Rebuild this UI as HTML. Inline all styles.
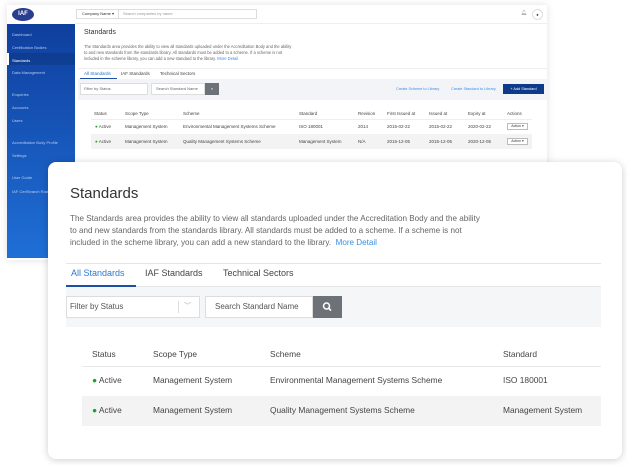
<!DOCTYPE html>
<html><head><style>
*{margin:0;padding:0;box-sizing:border-box}
body{width:627px;height:465px;background:#fff;position:relative;overflow:hidden;font-family:"Liberation Sans",sans-serif;color:#333}
.a{position:absolute;white-space:nowrap}
#back{position:absolute;left:7px;top:5px;width:540px;height:255px;background:#fff;box-shadow:0 0 8px rgba(0,0,0,.12)}
#side{position:absolute;left:7px;top:24px;width:68px;height:234px;background:linear-gradient(#0f3f9e,#1f6fd6)}
.s{position:absolute;left:5px;font-size:4px;color:#b9cbee}
#card{position:absolute;left:48px;top:162px;width:574px;height:297px;background:#fff;border-radius:8px;box-shadow:0 1px 8px rgba(0,0,0,.2)}
.f{font-size:4.5px;color:#444}
.F{font-size:8.4px;color:#444}
</style></head><body>
<div id="back"></div>
<!-- logo -->
<div class="a" style="left:12px;top:8px;width:22px;height:13px;border-radius:50%;background:#2a3d8f;color:#fff;font-size:6px;font-weight:bold;text-align:center;line-height:13px">IAF</div>
<div class="a" style="left:75px;top:5px;width:472px;height:19px;border-bottom:1px solid #eee"></div>
<div class="a" style="left:76px;top:9px;width:43px;height:10px;border:1px solid #ddd;font-size:4px;line-height:8px;padding-left:5px;color:#333">Company Name ▾</div>
<div class="a" style="left:119px;top:9px;width:138px;height:10px;border:1px solid #ddd;border-left:none;font-size:4px;line-height:8px;padding-left:4px;color:#999">Search companies by name</div>
<div class="a" style="left:521px;top:10px;font-size:5px;color:#888">🔔︎</div>
<div class="a" style="left:532px;top:9px;width:11px;height:11px;border:1px solid #ddd;border-radius:50%;font-size:4px;text-align:center;line-height:9px">●</div>
<div id="side">
<div class="s" style="top:8px">Dashboard</div>
<div class="s" style="top:21px">Certification Bodies</div>
<div style="position:absolute;left:0;top:29px;width:68px;height:12px;background:rgba(0,0,0,.12);border-left:2px solid #fff"></div>
<div class="s" style="top:34px;color:#fff">Standards</div>
<div class="s" style="top:46px">Data Management</div>
<div class="s" style="top:68px">Enquiries</div>
<div class="s" style="top:81px">Accounts</div>
<div class="s" style="top:94px">Users</div>
<div class="s" style="top:116px">Accreditation Body Profile</div>
<div class="s" style="top:129px">Settings</div>
<div class="s" style="top:151px">User Guide</div>
<div class="s" style="top:165px">IAF CertSearch Rad</div>
</div>
<div class="a" style="left:84px;top:29px;font-size:7px;color:#333">Standards</div>
<div class="a" style="left:84px;top:44px;font-size:4.1px;line-height:6px;color:#666">The Standards area provides the ability to view all standards uploaded under the Accreditation Body and the ability<br>to and new standards from the standards library. All standards must be added to a scheme. If a scheme is not<br>included in the scheme library, you can add a new standard to the library. <span style="color:#3a8ee6">More Detail</span></div>
<div class="a" style="left:78px;top:68px;width:469px;border-top:1px solid #eee"></div>
<div class="a" style="left:84px;top:71px;font-size:4.5px;color:#2a6fc4">All Standards</div>
<div class="a" style="left:80px;top:78px;width:37px;border-top:1px solid #1e4fa5"></div>
<div class="a" style="left:121px;top:71px;font-size:4.5px;color:#444">IAF Standards</div>
<div class="a" style="left:160px;top:71px;font-size:4.5px;color:#444">Technical Sectors</div>
<div class="a" style="left:78px;top:79px;width:469px;height:21px;background:#f3f4f7"></div>
<div class="a" style="left:80px;top:83px;width:68px;height:12px;background:#fff;border:1px solid #ddd;font-size:4px;line-height:10px;padding-left:3px;color:#666">Filter by Status</div>
<div class="a" style="left:151px;top:83px;width:54px;height:12px;background:#fff;border:1px solid #ddd;font-size:4px;line-height:10px;padding-left:4px;color:#666">Search Standard Name</div>
<div class="a" style="left:205px;top:83px;width:14px;height:12px;background:#6c7278;color:#fff;font-size:4px;text-align:center;line-height:12px">⌕</div>
<div class="a" style="left:396px;top:87px;font-size:3.8px;color:#3a8ee6">Create Scheme to Library</div>
<div class="a" style="left:451px;top:87px;font-size:3.8px;color:#3a8ee6">Create Standard to Library</div>
<div class="a" style="left:503px;top:84px;width:41px;height:10px;background:#0d3a8a;color:#fff;font-size:3.8px;text-align:center;line-height:10px">+ Add Standard</div>
<div class="a" style="left:78px;top:100px;width:466px;height:60px;background:#fff"></div>
<div class="a f" style="left:94px;top:111px">Status</div><div class="a f" style="left:125px;top:111px">Scope Type</div><div class="a f" style="left:183px;top:111px">Scheme</div><div class="a f" style="left:299px;top:111px">Standard</div><div class="a f" style="left:358px;top:111px">Revision</div><div class="a f" style="left:387px;top:111px">First Issued at</div><div class="a f" style="left:429px;top:111px">Issued at</div><div class="a f" style="left:468px;top:111px">Expiry at</div><div class="a f" style="left:507px;top:111px">Actions</div>
<div class="a" style="left:91px;top:119px;width:441px;border-top:1px solid #eee"></div>
<div class="a f" style="left:95px;top:124px"><span style="color:#2a2">●</span> Active</div><div class="a f" style="left:125px;top:124px">Management System</div><div class="a f" style="left:183px;top:124px">Environmental Management Systems Scheme</div><div class="a f" style="left:299px;top:124px">ISO 180001</div><div class="a f" style="left:358px;top:124px">2014</div><div class="a f" style="left:387px;top:124px">2015-02-22</div><div class="a f" style="left:429px;top:124px">2015-02-22</div><div class="a f" style="left:468px;top:124px">2020-02-22</div>
<div class="a" style="left:507px;top:123px;width:21px;height:7px;border:1px solid #bbb;font-size:3.5px;text-align:center;line-height:5px">Action ▾</div>
<div class="a" style="left:91px;top:134px;width:441px;height:15px;background:#f3f3f3"></div>
<div class="a f" style="left:95px;top:139px"><span style="color:#2a2">●</span> Active</div><div class="a f" style="left:125px;top:139px">Management System</div><div class="a f" style="left:183px;top:139px">Quality Management Systems Scheme</div><div class="a f" style="left:299px;top:139px">Management System</div><div class="a f" style="left:358px;top:139px">N/A</div><div class="a f" style="left:387px;top:139px">2015-12-05</div><div class="a f" style="left:429px;top:139px">2015-12-05</div><div class="a f" style="left:468px;top:139px">2020-12-05</div>
<div class="a" style="left:507px;top:138px;width:21px;height:7px;border:1px solid #bbb;font-size:3.5px;text-align:center;line-height:5px;background:#fff">Action ▾</div>

<div id="card"></div>
<div class="a" style="left:70px;top:185px;font-size:15px;color:#333">Standards</div>
<div class="a" style="left:70px;top:213px;font-size:8.1px;line-height:12px;color:#666">The Standards area provides the ability to view all standards uploaded under the Accreditation Body and the ability<br>to and new standards from the standards library. All standards must be added to a scheme. If a scheme is not<br>included in the scheme library, you can add a new standard to the library.&nbsp; <span style="color:#3a8ee6">More Detail</span></div>
<div class="a" style="left:66px;top:263px;width:535px;border-top:1px solid #e6e6e6"></div>
<div class="a" style="left:71px;top:268px;font-size:9px;color:#2a7bd0">All Standards</div>
<div class="a" style="left:145px;top:268px;font-size:9px;color:#444">IAF Standards</div>
<div class="a" style="left:223px;top:268px;font-size:9px;color:#444">Technical Sectors</div>
<div class="a" style="left:66px;top:286px;width:535px;height:41px;background:#f5f6f8;border-top:1px solid #e6e6e6"></div>
<div class="a" style="left:66px;top:285px;width:70px;border-top:2px solid #1e4fa5"></div>
<div class="a" style="left:66px;top:296px;width:134px;height:22px;background:#fff;border:1px solid #ddd;font-size:8px;line-height:20px;padding-left:3px;color:#555">Filter by Status<span style="position:absolute;left:111px;top:4px;height:12px;border-left:1px solid #ddd"></span><span style="position:absolute;left:117px;top:0;color:#aaa;font-size:7px">﹀</span></div>
<div class="a" style="left:205px;top:296px;width:108px;height:22px;background:#fff;border:1px solid #ddd;font-size:8px;line-height:20px;padding-left:9px;color:#555">Search Standard Name</div>
<div class="a" style="left:313px;top:296px;width:29px;height:22px;background:#6c7278"><svg width="29" height="22"><circle cx="13.5" cy="10" r="3" fill="none" stroke="#fff" stroke-width="1.5"/><path d="M15.6 12.2l2.4 2.4" stroke="#fff" stroke-width="1.6"/></svg></div>
<div class="a F" style="left:92px;top:349px">Status</div><div class="a F" style="left:153px;top:349px">Scope Type</div><div class="a F" style="left:270px;top:349px">Scheme</div><div class="a F" style="left:503px;top:349px">Standard</div>
<div class="a" style="left:82px;top:366px;width:519px;border-top:1px solid #e8e8e8"></div>
<div class="a F" style="left:92px;top:375px"><span style="color:#1ea02b">●</span> Active</div><div class="a F" style="left:153px;top:375px">Management System</div><div class="a F" style="left:270px;top:375px">Environmental Management Systems Scheme</div><div class="a F" style="left:503px;top:375px">ISO 180001</div>
<div class="a" style="left:82px;top:396px;width:519px;height:30px;background:#f3f3f3"></div>
<div class="a F" style="left:92px;top:405px"><span style="color:#1ea02b">●</span> Active</div><div class="a F" style="left:153px;top:405px">Management System</div><div class="a F" style="left:270px;top:405px">Quality Management Systems Scheme</div><div class="a F" style="left:503px;top:405px">Management System</div>
</body></html>
